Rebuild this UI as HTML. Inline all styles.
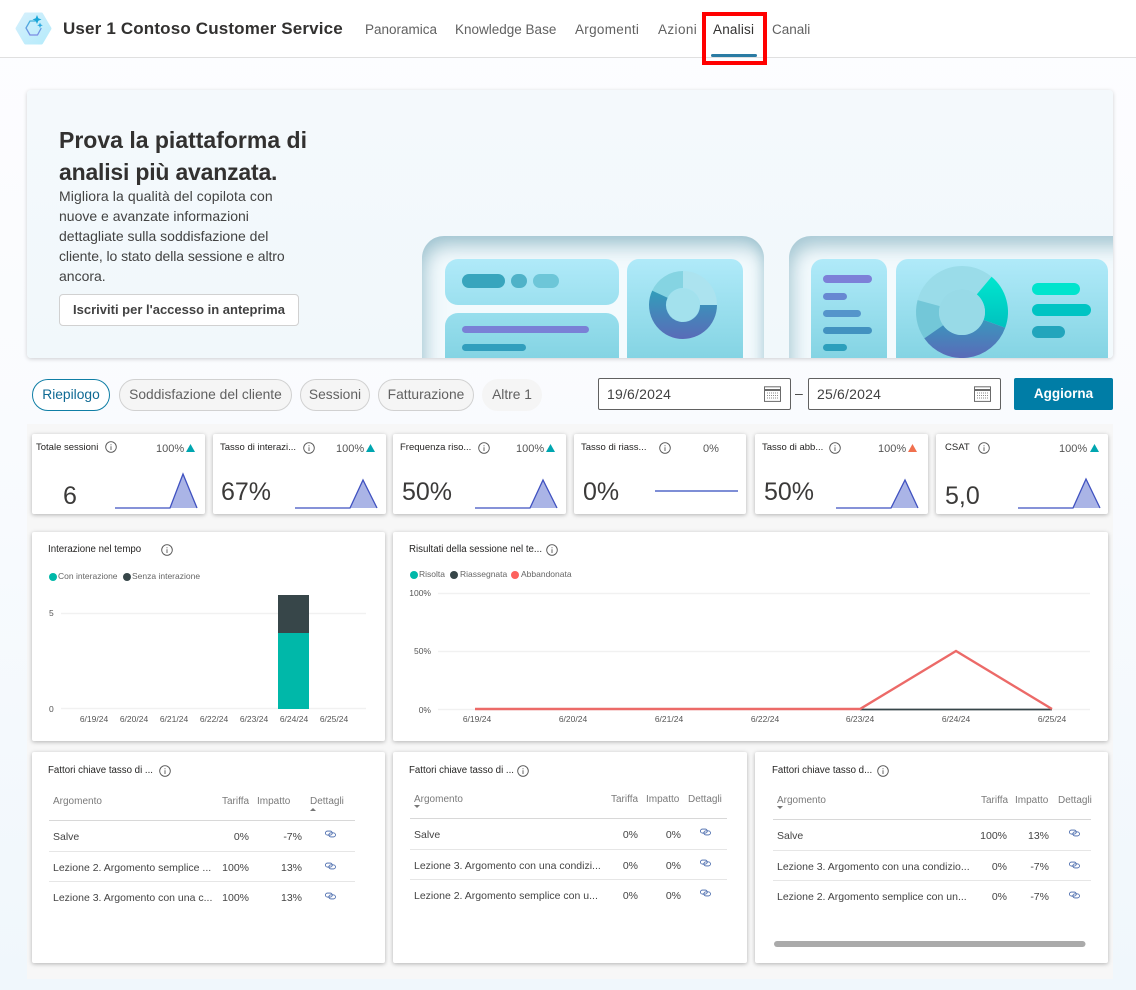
<!DOCTYPE html>
<html lang="it"><head><meta charset="utf-8"><title>Analisi</title>
<style>
html,body{margin:0;padding:0}
body{width:1136px;height:990px;position:relative;overflow:hidden;background:linear-gradient(180deg,#fdfdff 0,#f9fbfe 45%,#f0f7fc 100%);font-family:"Liberation Sans",sans-serif;color:#252423}
.t{position:absolute;white-space:nowrap;line-height:20px;height:20px}
.b{position:absolute;box-sizing:border-box}
.card{position:absolute;background:#fff;border-radius:2px;box-shadow:0 1px 4px rgba(0,0,0,.28)}
.chip{position:absolute;box-sizing:border-box;height:32px;top:379px;border-radius:16px;border:1px solid #d1d1d1;background:#f5f5f5;color:#616161;font-size:13.8px;line-height:30px;text-align:center;white-space:nowrap}
.nav{font-size:13.5px;color:#616161;top:20px}
.body{font-size:14px;color:#424242;left:59px}
.date{position:absolute;box-sizing:border-box;top:378px;width:193px;height:32px;background:#fff;border:1px solid #616161;border-radius:2px;font-size:14px;letter-spacing:.2px;line-height:30px;padding-left:8px;color:#424242}
svg text{font-family:"Liberation Sans",sans-serif}
.kl{font-size:9.5px;fill:#252423}.kp{font-size:11px;fill:#555}.kn{font-size:25px;fill:#3b3a39}
.ct{font-size:9.7px;fill:#252423}.lg{font-size:8.5px;fill:#666}.ax{font-size:8.5px;fill:#555}
.th{font-size:10px;fill:#7a7a7a}.td{font-size:10.5px;fill:#444}
</style></head>
<body>
<div class="b" style="left:0;top:0;width:1136px;height:58px;background:#fff;border-bottom:1px solid #e0e0e0"></div>
<div class="b" style="left:27px;top:424px;width:1086px;height:555px;background:#f7f7f7"></div>
<div class="t" style="left:63px;top:19px;font-size:17px;letter-spacing:.16px;font-weight:bold;color:#323130">User 1 Contoso Customer Service</div>
<div class="t nav" style="left:365px">Panoramica</div>
<div class="t nav" style="left:455px">Knowledge Base</div>
<div class="t nav" style="left:575px;letter-spacing:.3px">Argomenti</div>
<div class="t nav" style="left:658px;letter-spacing:.4px">Azioni</div>
<div class="t nav" style="left:713px;letter-spacing:.2px;color:#323130">Analisi</div>
<div class="t nav" style="left:772px">Canali</div>
<div class="b" style="left:711px;top:54px;width:46px;height:3px;background:#2a7ba3;border-radius:2px"></div>
<div class="b" style="left:702px;top:12px;width:65px;height:53px;border:4px solid #f00"></div>

<div class="b" style="left:27px;top:90px;width:1086px;height:268px;background:linear-gradient(180deg,#f4f9fc,#f1f8fb);border-radius:4px;box-shadow:0 1px 4px rgba(0,0,0,.18);overflow:hidden">
  <div class="b" style="left:395px;top:146px;width:342px;height:160px;border-radius:22px;background:#f3fafd;box-shadow:inset 3px 10px 18px rgba(90,150,170,.5),inset -3px 0 10px rgba(140,190,205,.22)"></div>
  <div class="b" style="left:762px;top:146px;width:360px;height:160px;border-radius:22px;background:#f3fafd;box-shadow:inset 3px 10px 18px rgba(90,150,170,.5)"></div>
</div>
<div class="t" style="left:59px;top:124px;height:32px;line-height:32px;font-size:23px;font-weight:bold;color:#323130">Prova la piattaforma di</div>
<div class="t" style="left:59px;top:156px;height:32px;line-height:32px;font-size:23px;letter-spacing:-.2px;font-weight:bold;color:#323130">analisi più avanzata.</div>
<div class="t body" style="top:186px;letter-spacing:.1px">Migliora la qualità del copilota con</div>
<div class="t body" style="top:206px">nuove e avanzate informazioni</div>
<div class="t body" style="top:226px">dettagliate sulla soddisfazione del</div>
<div class="t body" style="top:246px;letter-spacing:-.08px">cliente, lo stato della sessione e altro</div>
<div class="t body" style="top:266px">ancora.</div>
<div class="b" style="left:59px;top:294px;width:240px;height:32px;background:#fff;border:1px solid #d1d1d1;border-radius:4px;font-size:13px;font-weight:bold;color:#424242;line-height:30px;text-align:center;white-space:nowrap">Iscriviti per l'accesso in anteprima</div>

<div class="chip" style="left:32px;width:78px;background:#fff;border-color:#0f7ea5;color:#0f6a94">Riepilogo</div>
<div class="chip" style="left:119px;width:173px">Soddisfazione del cliente</div>
<div class="chip" style="left:300px;width:70px">Sessioni</div>
<div class="chip" style="left:378px;width:96px">Fatturazione</div>
<div class="chip" style="left:482px;width:60px;border-color:#f5f5f5">Altre 1</div>
<div class="date" style="left:598px">19/6/2024</div>
<div class="t" style="left:795px;top:383px;font-size:14px;color:#424242">–</div>
<div class="date" style="left:808px">25/6/2024</div>
<div class="b" style="left:1014px;top:378px;width:99px;height:32px;background:#007da6;border-radius:2px;color:#fff;font-size:13.5px;font-weight:bold;line-height:32px;text-align:center">Aggiorna</div>

<div class="card" style="left:32px;top:434px;width:173px;height:80px"></div>
<div class="card" style="left:213px;top:434px;width:173px;height:80px"></div>
<div class="card" style="left:393px;top:434px;width:173px;height:80px"></div>
<div class="card" style="left:574px;top:434px;width:172px;height:80px"></div>
<div class="card" style="left:755px;top:434px;width:173px;height:80px"></div>
<div class="card" style="left:936px;top:434px;width:172px;height:80px"></div>
<div class="card" style="left:32px;top:532px;width:353px;height:209px"></div>
<div class="card" style="left:393px;top:532px;width:715px;height:209px"></div>
<div class="card" style="left:32px;top:752px;width:353px;height:211px"></div>
<div class="card" style="left:393px;top:752px;width:354px;height:211px"></div>
<div class="card" style="left:755px;top:752px;width:353px;height:211px"></div>

<svg width="1136" height="990" viewBox="0 0 1136 990" style="position:absolute;left:0;top:0">
<defs>
<linearGradient id="g1" gradientUnits="userSpaceOnUse" x1="0" y1="259" x2="0" y2="358"><stop offset="0" stop-color="#b0eaf9"/><stop offset="1" stop-color="#84d4e3"/></linearGradient>
<linearGradient id="d1" gradientUnits="userSpaceOnUse" x1="0" y1="285" x2="0" y2="340"><stop offset="0" stop-color="#2ea3bb"/><stop offset="1" stop-color="#5a6ab8"/></linearGradient>
<linearGradient id="d2" gradientUnits="userSpaceOnUse" x1="0" y1="320" x2="0" y2="358"><stop offset="0" stop-color="#3a97bd"/><stop offset="1" stop-color="#5a6ab8"/></linearGradient>
<linearGradient id="gr" gradientUnits="userSpaceOnUse" x1="0" y1="275" x2="0" y2="340"><stop offset="0" stop-color="#00e8cf"/><stop offset="1" stop-color="#00b8bb"/></linearGradient>
<linearGradient id="hx" x1="0" y1="0" x2="1" y2="1"><stop offset="0" stop-color="#d6f0fc"/><stop offset="1" stop-color="#b5ebfb"/></linearGradient>
<linearGradient id="hl" gradientUnits="userSpaceOnUse" x1="0" y1="20" x2="0" y2="36"><stop offset="0" stop-color="#3fb4dc"/><stop offset="1" stop-color="#8088e4"/></linearGradient>
<clipPath id="ban"><rect x="27" y="90" width="1086" height="268"/></clipPath>
<symbol id="i" viewBox="0 0 12 12"><circle cx="6" cy="6" r="5.3" fill="none" stroke="#555" stroke-width=".9"/><path d="M6 5.200V9M6 3.200v1" stroke="#555" stroke-width=".9" fill="none"/></symbol>
<symbol id="lk" viewBox="0 0 12 8"><rect x=".5" y=".8" width="7.4" height="4.4" rx="2.2" fill="none" stroke="#3f62a8" stroke-width=".9"/><rect x="4.2" y="2.8" width="7.2" height="4.4" rx="2.2" fill="none" stroke="#3f62a8" stroke-width=".9"/></symbol>
<symbol id="cal" viewBox="0 0 17 16"><rect x=".5" y=".8" width="16" height="14.6" fill="#fff" stroke="#6b6b6b"/><path d="M.5 4h16" stroke="#6b6b6b" stroke-width="2"/><path d="M3 7h11M3 9.500h11M3 12h11" stroke="#8a8a8a" stroke-dasharray="1 1"/></symbol>
</defs>

<!-- logo -->
<path d="M17 28.500 25.500 14h16L50 28.500 41.500 43h-16z" fill="url(#hx)" stroke="url(#hx)" stroke-width="3" stroke-linejoin="round"/>
<path d="M35.500 21H30L26 28l4 7h7.500l3.500-6.500" fill="none" stroke="url(#hl)" stroke-width="1.300" stroke-linejoin="round" stroke-linecap="round"/>
<path d="M37 15l1.300 3.200 3.200 1.300-3.200 1.300-1.300 3.200-1.300-3.200-3.200-1.300 3.200-1.300z" fill="#17a6d8"/>
<path d="M40 22.500l.8 2 2 .8-2 .8-.8 2-.8-2-2-.8 2-.8z" fill="#2aa8e0"/>

<!-- banner art -->
<g clip-path="url(#ban)">
<rect x="445" y="259" width="174" height="46" rx="13" fill="url(#g1)"/>
<rect x="445" y="313" width="174" height="60" rx="13" fill="url(#g1)"/>
<rect x="627" y="259" width="116" height="110" rx="12" fill="url(#g1)"/>
<rect x="811" y="259" width="76" height="110" rx="12" fill="url(#g1)"/>
<rect x="896" y="259" width="212" height="110" rx="12" fill="url(#g1)"/>
<rect x="462" y="274" width="43" height="14" rx="7" fill="#38a5bd"/>
<rect x="511" y="274" width="16" height="14" rx="7" fill="#4fb2c8"/>
<rect x="533" y="274" width="26" height="14" rx="7" fill="#6dc6d8"/>
<rect x="462" y="326" width="127" height="7" rx="3.500" fill="#7a80d6"/>
<rect x="462" y="344" width="64" height="7" rx="3.500" fill="#319ebd"/>
<circle cx="683" cy="305" r="25.500" fill="none" stroke="#ace3ef" stroke-width="17"/>
<path d="M683 279.500A25.500 25.500 0 0 0 659.900 294.200" fill="none" stroke="#85d4e2" stroke-width="17"/>
<path d="M659.900 294.200A25.500 25.500 0 1 0 708.500 305" fill="none" stroke="url(#d1)" stroke-width="17"/>
<circle cx="683" cy="305" r="16.500" fill="#a3e1ed"/>
<rect x="823" y="275" width="49" height="8" rx="4" fill="#7d80d8"/>
<rect x="823" y="293" width="24" height="7" rx="3.500" fill="#6788d2"/>
<rect x="823" y="310" width="38" height="7" rx="3.500" fill="#5595cb"/>
<rect x="823" y="327" width="49" height="7" rx="3.500" fill="#4292c0"/>
<rect x="823" y="344" width="24" height="7" rx="3.500" fill="#2c9fbc"/>
<circle cx="962" cy="312" r="34.500" fill="none" stroke="#9adce9" stroke-width="23"/>
<path d="M933.700 331.800A34.500 34.500 0 0 1 928.700 303.100" fill="none" stroke="#73c7d8" stroke-width="23"/>
<path d="M984.200 285.600A34.500 34.500 0 0 1 994.400 323.800" fill="none" stroke="url(#gr)" stroke-width="23"/>
<path d="M994.400 323.800A34.500 34.500 0 0 1 933.700 331.800" fill="none" stroke="url(#d2)" stroke-width="23"/>
<circle cx="962" cy="312" r="23" fill="#98dae7"/>
<rect x="1032" y="283" width="48" height="12" rx="6" fill="#00e4cd"/>
<rect x="1032" y="304" width="59" height="12" rx="6" fill="#00c4c3"/>
<rect x="1032" y="326" width="33" height="12" rx="6" fill="#22a5bc"/>
</g>

<use href="#cal" x="764" y="386" width="17" height="16"/>
<use href="#cal" x="974" y="386" width="17" height="16"/>

<!-- KPI -->
<text class="kl" x="36" y="450">Totale sessioni</text><use href="#i" x="105" y="441" width="12" height="12"/>
<text class="kp" x="156" y="452">100%</text><path d="M186 452l4.500-8 4.500 8z" fill="#00a6b0"/>
<path d="M115 508h55l13-34 14 34z" fill="#aab4e6"/><path d="M115 508h55l13-34 14 34" fill="none" stroke="#3f51c0" stroke-width="1.300"/>
<text class="kn" x="63" y="504">6</text>

<text class="kl" x="220" y="450">Tasso di interazi...</text><use href="#i" x="303" y="442" width="12" height="12"/>
<text class="kp" x="336" y="452">100%</text><path d="M366 452l4.500-8 4.500 8z" fill="#00a6b0"/>
<path d="M295 508h55l13-28 14 28z" fill="#aab4e6"/><path d="M295 508h55l13-28 14 28" fill="none" stroke="#3f51c0" stroke-width="1.300"/>
<text class="kn" x="221" y="500">67%</text>

<text class="kl" x="400" y="450">Frequenza riso...</text><use href="#i" x="478" y="442" width="12" height="12"/>
<text class="kp" x="516" y="452">100%</text><path d="M546 452l4.500-8 4.500 8z" fill="#00a6b0"/>
<path d="M475 508h55l13-28 14 28z" fill="#aab4e6"/><path d="M475 508h55l13-28 14 28" fill="none" stroke="#3f51c0" stroke-width="1.300"/>
<text class="kn" x="402" y="500">50%</text>

<text class="kl" x="581" y="450">Tasso di riass...</text><use href="#i" x="659" y="442" width="12" height="12"/>
<text class="kp" x="703" y="452">0%</text>
<path d="M655 491h83" stroke="#5468c8" stroke-width="1.500"/>
<text class="kn" x="583" y="500">0%</text>

<text class="kl" x="762" y="450">Tasso di abb...</text><use href="#i" x="829" y="442" width="12" height="12"/>
<text class="kp" x="878" y="452">100%</text><path d="M908 452l4.500-8 4.500 8z" fill="#f0704e"/>
<path d="M836 508h55l14-28 13 28z" fill="#aab4e6"/><path d="M836 508h55l14-28 13 28" fill="none" stroke="#3f51c0" stroke-width="1.300"/>
<text class="kn" x="764" y="500">50%</text>

<text class="kl" x="945" y="450">CSAT</text><use href="#i" x="978" y="442" width="12" height="12"/>
<text class="kp" x="1059" y="452">100%</text><path d="M1090 452l4.500-8 4.500 8z" fill="#00a6b0"/>
<path d="M1018 508h55l13-29 14 29z" fill="#aab4e6"/><path d="M1018 508h55l13-29 14 29" fill="none" stroke="#3f51c0" stroke-width="1.300"/>
<text class="kn" x="945" y="504">5,0</text>

<!-- chart 1 -->
<text class="ct" x="48" y="552">Interazione nel tempo</text><use href="#i" x="161" y="544" width="12" height="12"/>
<circle cx="53" cy="577" r="4" fill="#00b8a9"/><text class="lg" x="58" y="579">Con interazione</text>
<circle cx="127" cy="577" r="4" fill="#374649"/><text class="lg" x="132" y="579">Senza interazione</text>
<path d="M61 613.500h305M61 708.500h305" stroke="#f1f1f1" stroke-width="1.500"/>
<text class="ax" x="49" y="616">5</text><text class="ax" x="49" y="712">0</text>
<rect x="278" y="595" width="31" height="38" fill="#374649"/><rect x="278" y="633" width="31" height="76" fill="#00b8a9"/>
<g class="ax" text-anchor="middle"><text x="94" y="722">6/19/24</text><text x="134" y="722">6/20/24</text><text x="174" y="722">6/21/24</text><text x="214" y="722">6/22/24</text><text x="254" y="722">6/23/24</text><text x="294" y="722">6/24/24</text><text x="334" y="722">6/25/24</text></g>

<!-- chart 2 -->
<text class="ct" x="409" y="552">Risultati della sessione nel te...</text><use href="#i" x="546" y="544" width="12" height="12"/>
<circle cx="414" cy="575" r="4" fill="#00b8a9"/><text class="lg" x="419" y="577">Risolta</text>
<circle cx="454" cy="575" r="4" fill="#374649"/><text class="lg" x="460" y="577">Riassegnata</text>
<circle cx="515" cy="575" r="4" fill="#fd625e"/><text class="lg" x="521" y="577">Abbandonata</text>
<path d="M438 593.500h652M438 651.500h652M438 709.500h652" stroke="#f1f1f1" stroke-width="1.500"/>
<g class="ax" text-anchor="end"><text x="431" y="596">100%</text><text x="431" y="654">50%</text><text x="431" y="713">0%</text></g>
<path d="M860 709.500h192" stroke="#374649" stroke-width="1.800"/>
<path d="M475 709h385l96-58 96 58" fill="none" stroke="#ec6a68" stroke-width="2.400"/>
<g class="ax" text-anchor="middle"><text x="477" y="722">6/19/24</text><text x="573" y="722">6/20/24</text><text x="669" y="722">6/21/24</text><text x="765" y="722">6/22/24</text><text x="860" y="722">6/23/24</text><text x="956" y="722">6/24/24</text><text x="1052" y="722">6/25/24</text></g>

<!-- table 1 -->
<text class="ct" x="48" y="773">Fattori chiave tasso di ...</text><use href="#i" x="159" y="765" width="12" height="12"/>
<text class="th" x="53" y="804">Argomento</text><text class="th" x="222" y="804">Tariffa</text><text class="th" x="257" y="804">Impatto</text><text class="th" x="310" y="804">Dettagli</text>
<path d="M310 811l3-3 3 3z" fill="#777"/>
<path d="M49 820.500h306" stroke="#d8d8d8"/><path d="M49 851.500h306M49 881.500h306" stroke="#e6e6e6"/>
<text class="td" x="53" y="840">Salve</text><text class="td" x="249" y="840" text-anchor="end">0%</text><text class="td" x="302" y="840" text-anchor="end">-7%</text><use href="#lk" x="325" y="830" width="11" height="8"/>
<text class="td" x="53" y="871">Lezione 2. Argomento semplice ...</text><text class="td" x="249" y="871" text-anchor="end">100%</text><text class="td" x="302" y="871" text-anchor="end">13%</text><use href="#lk" x="325" y="862" width="11" height="8"/>
<text class="td" x="53" y="901">Lezione 3. Argomento con una c...</text><text class="td" x="249" y="901" text-anchor="end">100%</text><text class="td" x="302" y="901" text-anchor="end">13%</text><use href="#lk" x="325" y="892" width="11" height="8"/>

<!-- table 2 -->
<text class="ct" x="409" y="773">Fattori chiave tasso di ...</text><use href="#i" x="517" y="765" width="12" height="12"/>
<text class="th" x="414" y="802">Argomento</text><text class="th" x="611" y="802">Tariffa</text><text class="th" x="646" y="802">Impatto</text><text class="th" x="688" y="802">Dettagli</text>
<path d="M414 805l3 3 3-3z" fill="#777"/>
<path d="M410 818.500h317" stroke="#d8d8d8"/><path d="M410 849.500h317M410 879.500h317" stroke="#e6e6e6"/>
<text class="td" x="414" y="838">Salve</text><text class="td" x="638" y="838" text-anchor="end">0%</text><text class="td" x="681" y="838" text-anchor="end">0%</text><use href="#lk" x="700" y="828" width="11" height="8"/>
<text class="td" x="414" y="869">Lezione 3. Argomento con una condizi...</text><text class="td" x="638" y="869" text-anchor="end">0%</text><text class="td" x="681" y="869" text-anchor="end">0%</text><use href="#lk" x="700" y="859" width="11" height="8"/>
<text class="td" x="414" y="899">Lezione 2. Argomento semplice con u...</text><text class="td" x="638" y="899" text-anchor="end">0%</text><text class="td" x="681" y="899" text-anchor="end">0%</text><use href="#lk" x="700" y="889" width="11" height="8"/>

<!-- table 3 -->
<text class="ct" x="772" y="773">Fattori chiave tasso d...</text><use href="#i" x="877" y="765" width="12" height="12"/>
<text class="th" x="777" y="803">Argomento</text><text class="th" x="981" y="803">Tariffa</text><text class="th" x="1015" y="803">Impatto</text><text class="th" x="1058" y="803">Dettagli</text>
<path d="M777 806l3 3 3-3z" fill="#777"/>
<path d="M773 819.500h318" stroke="#d8d8d8"/><path d="M773 850.500h318M773 880.500h318" stroke="#e6e6e6"/>
<text class="td" x="777" y="839">Salve</text><text class="td" x="1007" y="839" text-anchor="end">100%</text><text class="td" x="1049" y="839" text-anchor="end">13%</text><use href="#lk" x="1069" y="829" width="11" height="8"/>
<text class="td" x="777" y="870">Lezione 3. Argomento con una condizio...</text><text class="td" x="1007" y="870" text-anchor="end">0%</text><text class="td" x="1049" y="870" text-anchor="end">-7%</text><use href="#lk" x="1069" y="861" width="11" height="8"/>
<text class="td" x="777" y="900">Lezione 2. Argomento semplice con un...</text><text class="td" x="1007" y="900" text-anchor="end">0%</text><text class="td" x="1049" y="900" text-anchor="end">-7%</text><use href="#lk" x="1069" y="891" width="11" height="8"/>
<rect x="774" y="941" width="311.500" height="6" rx="3" fill="#aaa"/>
</svg>
</body></html>
